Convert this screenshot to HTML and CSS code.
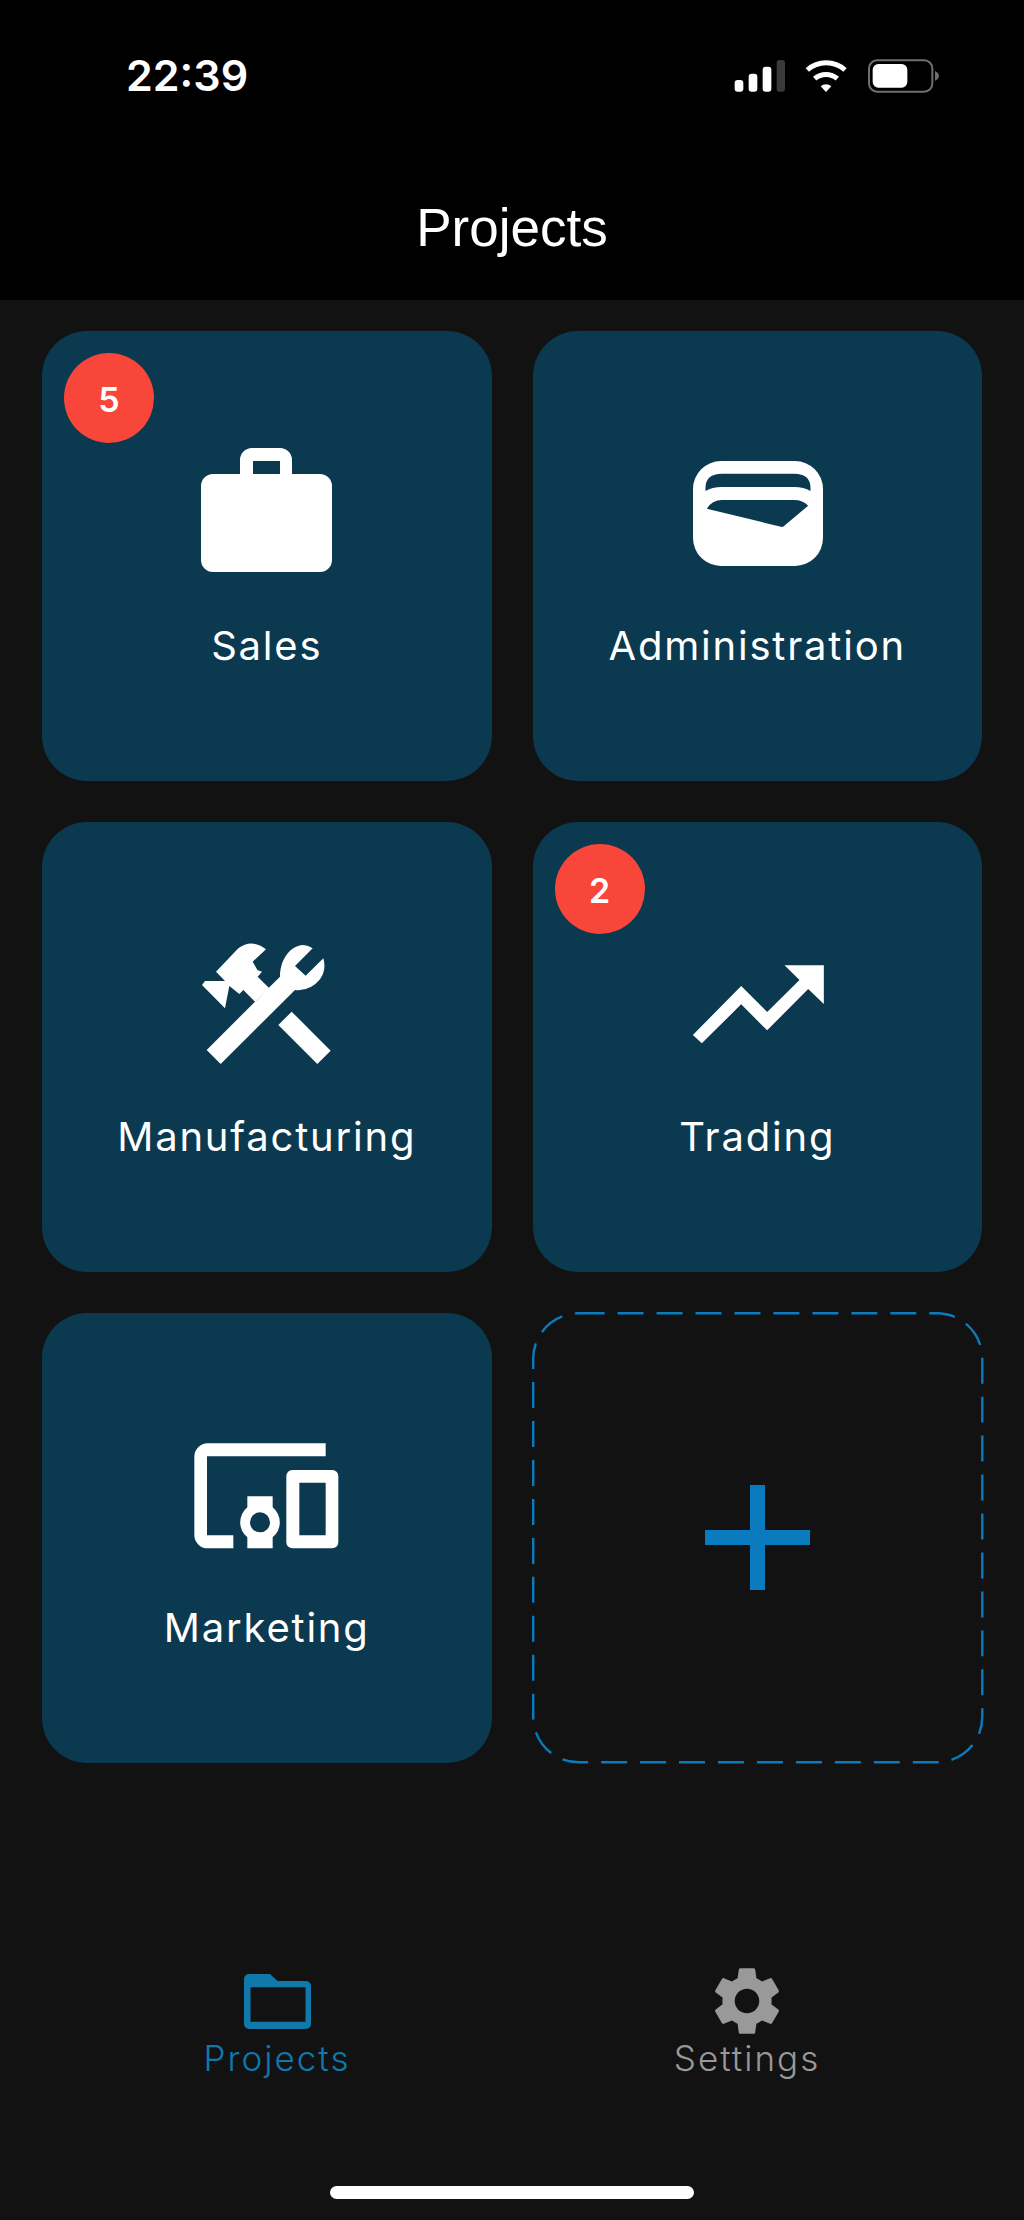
FILE: index.html
```html
<!DOCTYPE html>
<html lang="en">
<head>
    <meta charset="UTF-8">
    <meta name="viewport" content="width=device-width, initial-scale=1.0">
    <title>Projects</title>
    <link rel="stylesheet" href="styles.css">
</head>
<body>
    <div class="page">
        <!-- Header -->
        <header class="top">
            <div class="status-bar">
                <span class="time">22:39</span>
                <svg class="status-icons" viewBox="0 0 690 210">
                    <rect x="44" y="120" width="26" height="35" rx="9" fill="#fff"/>
                    <rect x="86" y="101" width="26" height="54" rx="9" fill="#fff"/>
                    <rect x="128" y="80" width="26" height="75" rx="9" fill="#fff"/>
                    <rect x="170" y="60" width="25" height="95" rx="8" fill="#3a3a3a"/>
                    <path d="M262 90 A85 85 0 0 1 375 90" fill="none" stroke="#fff" stroke-width="15"/>
                    <path d="M284 116 A52 52 0 0 1 352 116" fill="none" stroke="#fff" stroke-width="15"/>
                    <path d="M302 139 A24 24 0 0 1 334 139 L318 156 Z" fill="#fff"/>
                    <rect x="447" y="61" width="190" height="94" rx="24" fill="none" stroke="#6f6f6f" stroke-width="6"/>
                    <rect x="458" y="72" width="104" height="71" rx="17" fill="#fff"/>
                    <path d="M645 93 C653 97 657 102 657 107 C657 113 653 118 645 122 Z" fill="#6f6f6f"/>
                </svg>
            </div>
            <h1 class="title">Projects</h1>
        </header>

        <!-- Project cards -->
        <main class="grid">
            <div class="card">
                <span class="badge">5</span>
                <svg class="card-icon" viewBox="0 0 157 157">
                    <path fill-rule="evenodd" d="M52 40V26a12 12 0 0 1 12-12h28a12 12 0 0 1 12 12v14h28a12 12 0 0 1 12 12v74a12 12 0 0 1-12 12H25a12 12 0 0 1-12-12V52a12 12 0 0 1 12-12z M65 40h27V27H65z" fill="#fff"/>
                </svg>
                <span class="card-label">Sales</span>
            </div>
            <div class="card">
                <svg class="card-icon" viewBox="0 0 157 157">
                    <path fill-rule="evenodd" d="M42 27h74a28 28 0 0 1 28 28v49a28 28 0 0 1-28 28H42a28 28 0 0 1-28-28V55a28 28 0 0 1 28-28z M26.500 57Q33 53 43 53H115Q125 53 131.500 57V54Q131.500 39.700 115 39.700H43Q26.500 39.700 26.500 54z M27.800 74.700L103 93Q104 93 105 92L129.200 71.700Q124 66 115 66H43Q33 66 27.800 74.700z" fill="#fff"/>
                </svg>
                <span class="card-label">Administration</span>
            </div>
            <div class="card">
                <svg class="card-icon" viewBox="24 15 471 471">
                    <path d="M80 390L265 205L300 170C300 125 325 78 370 75Q385 76 398 85L345 138L377 167L430 115Q440 150 420 178Q390 215 345 210L122 432Z" fill="#fff"/>
                    <path d="M108 155L175 85Q215 55 258 88L218 125L232 150L246 155L233 170L268 205L225 245L190 210L178 222L148 198L135 265L66 195L75 183H135Z" fill="#fff"/>
                    <path d="M335 275L452 392L412 432L295 315Z" fill="#fff"/>
                </svg>
                <span class="card-label">Manufacturing</span>
            </div>
            <div class="card">
                <span class="badge">2</span>
                <svg class="card-icon" viewBox="445.500 315 471 471">
                    <path d="M487 645L632 498L710 576L807 480L762 436H880V552L833 507L710 631L632 553L514 670Z" fill="#fff"/>
                </svg>
                <span class="card-label">Trading</span>
            </div>
            <div class="card">
                <svg class="card-icon" viewBox="54 -12 471 471">
                    <path d="M467 70H113a40 40 0 0 0-40 40V345a40 40 0 0 0 40 40H190V346H111V109H467Z" fill="#fff"/>
                    <path fill-rule="evenodd" d="M367 150H487a18 18 0 0 1 18 18V367a18 18 0 0 1-18 18H367a18 18 0 0 1-18-18V168a18 18 0 0 1 18-18z M388 188V346H467V188z" fill="#fff"/>
                    <path fill-rule="evenodd" d="M232 229H308V262A58 58 0 0 1 308 352V385H232V352A58 58 0 0 1 232 262z M270 277a30 30 0 1 0 0 60a30 30 0 1 0 0-60z" fill="#fff"/>
                </svg>
                <span class="card-label">Marketing</span>
            </div>
            <div class="card card-add">
                <svg class="dashes" viewBox="0 0 450 450">
                    <rect x="0.200" y="0.200" width="449.600" height="449.600" rx="45.500" fill="none" stroke="#0a7bbd" stroke-width="2.400" stroke-dasharray="26 13"/>
                </svg>
                <span class="plus"></span>
            </div>
        </main>

        <!-- Tabs -->
        <nav class="tabs">
            <div class="tab tab-active">
                <span class="tab-icon">
                    <svg width="67" height="55" viewBox="0 0 67 55">
                        <path fill-rule="evenodd" d="M5 0H26L33.400 7H62a5 5 0 0 1 5 5V50a5 5 0 0 1-5 5H5a5 5 0 0 1-5-5V5a5 5 0 0 1 5-5z M6.500 13.300V47.700H61.500V13.300z" fill="#1178ac"/>
                    </svg>
                </span>
                <span class="tab-label">Projects</span>
            </div>
            <div class="tab">
                <span class="tab-icon">
                    <svg width="82" height="82" viewBox="0 0 24 24">
                        <path d="M19.14 12.94c.04-.3.06-.61.06-.94 0-.32-.02-.64-.07-.94l2.03-1.58c.18-.14.23-.41.12-.61l-1.92-3.32c-.12-.22-.37-.29-.59-.22l-2.39.96c-.5-.38-1.03-.7-1.62-.94L14.400 2.810c-.04-.24-.24-.41-.48-.41h-3.840c-.24 0-.43.17-.47.41L9.250 5.350C8.660 5.590 8.120 5.920 7.630 6.290L5.240 5.330c-.22-.08-.47 0-.59.22L2.740 8.870C2.620 9.080 2.660 9.340 2.860 9.480l2.030 1.580C4.840 11.360 4.800 11.690 4.800 12s.02.64.07.94l-2.030 1.580c-.18.14-.23.41-.12.61l1.920 3.320c.12.22.37.29.59.22l2.390-.96c.5.38 1.030.7 1.620.94l.36 2.540c.05.24.24.41.48.41h3.840c.24 0 .44-.17.47-.41l.36-2.540c.59-.24 1.130-.56 1.620-.94l2.390.96c.22.08.47 0 .59-.22l1.920-3.320c.12-.22.07-.47-.12-.61L19.140 12.940zM12 15.600c-1.980 0-3.600-1.620-3.600-3.600s1.620-3.600 3.600-3.600 3.600 1.620 3.600 3.600-1.620 3.600-3.600 3.600z" fill="#999"/>
                    </svg>
                </span>
                <span class="tab-label">Settings</span>
            </div>
        </nav>

        <div class="home-bar"><span class="home-indicator"></span></div>
    </div>
</body>
</html>
```

FILE: styles.css
```css
/* General Styling */
body {
    margin: 0;
    background-color: #121212;
    color: white;
    font-family: Inter, Arial, sans-serif;
}

.page {
    display: flex;
    flex-direction: column;
    min-height: 100vh;
}

/* Header */
.top {
    height: 299.5px;
    background-color: #000;
}

.status-bar {
    display: flex;
    align-items: flex-start;
    justify-content: space-between;
    height: 110px;
    padding: 40px 74px 0 126px;
    box-sizing: border-box;
}

.time {
    font-size: 43px;
    font-weight: 600;
    line-height: 70px;
}

.status-icons {
    width: 230px;
    height: 70px;
}

.title {
    margin: 85px 0 0;
    font-family: "Liberation Sans", Arial, sans-serif;
    font-size: 53px;
    font-weight: 400;
    line-height: 66px;
    text-align: center;
}

/* Cards */
.grid {
    flex: 1;
    display: grid;
    grid-template-columns: 1fr 1fr;
    grid-auto-rows: min-content;
    column-gap: 41px;
    row-gap: 41.5px;
    padding: 31.5px 42px 0;
}

.card {
    position: relative;
    aspect-ratio: 1;
    display: flex;
    flex-direction: column;
    align-items: center;
    justify-content: center;
    background-color: #0a3950;
    border-radius: 45px;
}

.card-icon {
    width: 157px;
    height: 157px;
}

.card-label {
    margin-top: 23px;
    font-size: 40px;
    line-height: 63px;
    letter-spacing: 1.8px;
}

.badge {
    position: absolute;
    top: 22px;
    left: 22px;
    width: 90px;
    height: 90px;
    border-radius: 50%;
    background-color: #f9463a;
    font-size: 34px;
    font-weight: 600;
    line-height: 94px;
    text-align: center;
}

.card-add {
    background-color: transparent;
}

.dashes {
    position: absolute;
    inset: 0;
    width: 100%;
    height: 100%;
    overflow: visible;
}

.plus {
    width: 105px;
    height: 105px;
    background:
        linear-gradient(#0a7bbd, #0a7bbd) center / 100% 15px no-repeat,
        linear-gradient(#0a7bbd, #0a7bbd) center / 15px 100% no-repeat;
}

/* Tabs */
.tabs {
    display: flex;
    padding: 0 42px;
}

.tab {
    flex: 1;
    display: flex;
    flex-direction: column;
    align-items: center;
    color: #999;
}

.tab-active {
    color: #1178ac;
}

.tab-icon {
    display: flex;
    align-items: center;
    justify-content: center;
    height: 82px;
}

.tab-label {
    font-size: 35px;
    font-weight: 300;
    line-height: 32px;
    letter-spacing: 2px;
}

/* Home indicator */
.home-bar {
    display: flex;
    justify-content: center;
    padding: 112px 0 21px;
}

.home-indicator {
    width: 364px;
    height: 13px;
    border-radius: 7px;
    background-color: white;
}
```
